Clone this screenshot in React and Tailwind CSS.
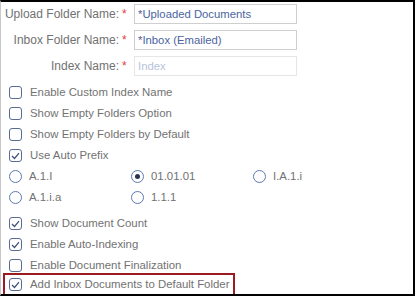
import React from "react";

const font = { fontFamily: '"Liberation Sans", Arial, sans-serif' };

function Box({ checked }) {
  return (
    <span className="w-[13px] h-[13px] rounded-[3px] border border-[#5b6b95] bg-white flex items-center justify-center shrink-0">
      {checked && (
        <svg width="9" height="8" viewBox="0 0 9 8">
          <path d="M1 4 L3.5 6.5 L8 1.2" fill="none" stroke="#3f4f7a" strokeWidth="1.2" />
        </svg>
      )}
    </span>
  );
}

function Radio({ checked }) {
  return (
    <span className="w-[13px] h-[13px] rounded-full border border-[#5b79b0] bg-white flex items-center justify-center shrink-0">
      {checked && <span className="w-[5px] h-[5px] rounded-full bg-[#2c3550]" />}
    </span>
  );
}

function CheckRow({ label, checked }) {
  return (
    <div className="h-[21px] flex items-center pl-[8px] gap-[8px]">
      <Box checked={checked} />
      <span className="text-[11.4px] text-[#727272] whitespace-nowrap">{label}</span>
    </div>
  );
}

function RadioItem({ label, checked }) {
  return (
    <div className="w-[122px] flex items-center gap-[7px]">
      <Radio checked={checked} />
      <span className="text-[11.4px] text-[#727272] whitespace-nowrap">{label}</span>
    </div>
  );
}

function Field({ label, value, disabled }) {
  return (
    <div className="h-[20px] flex items-center">
      <div className="w-[118px] text-right text-[12px] text-[#727272] whitespace-nowrap">{label}</div>
      <span className="w-[15px] pl-[3px] text-[12px] text-[#e0403a]">*</span>
      <div
        className={
          "w-[163px] h-[20px] border flex items-center pl-[3px] text-[11.3px] whitespace-nowrap " +
          (disabled
            ? "border-[#e6e6e6] text-[#b6c3dc]"
            : "border-[#cfcfcf] text-[#4a65a0]")
        }
      >
        {value}
      </div>
    </div>
  );
}

export default function App() {
  return (
    <div
      style={font}
      className="w-[415px] h-[296px] bg-white border-t-2 border-r-2 border-b-2 border-black border-l border-l-[#c8c8c8] overflow-hidden"
    >
      <div className="pt-[2px] flex flex-col gap-[6px]">
        <Field label="Upload Folder Name:" value="*Uploaded Documents" />
        <Field label="Inbox Folder Name:" value="*Inbox (Emailed)" />
        <Field label="Index Name:" value="Index" disabled />
      </div>
      <div className="mt-[6px] flex flex-col">
        <CheckRow label="Enable Custom Index Name" />
        <CheckRow label="Show Empty Folders Option" />
        <CheckRow label="Show Empty Folders by Default" />
        <CheckRow label="Use Auto Prefix" checked />
        <div className="h-[21px] flex items-center pl-[8px]">
          <RadioItem label="A.1.I" />
          <RadioItem label="01.01.01" checked />
          <RadioItem label="I.A.1.i" />
        </div>
        <div className="h-[21px] flex items-center pl-[8px]">
          <RadioItem label="A.1.i.a" />
          <RadioItem label="1.1.1" />
        </div>
        <div className="mt-[5px]">
          <CheckRow label="Show Document Count" checked />
          <CheckRow label="Enable Auto-Indexing" checked />
          <CheckRow label="Enable Document Finalization" />
        </div>
        <div className="ml-[2px] mt-[-3px] w-[232px] h-[23px] border-2 border-[#9a1c22] flex items-center pl-[4px] gap-[8px]">
          <Box checked />
          <span className="text-[11.4px] text-[#727272] whitespace-nowrap">Add Inbox Documents to Default Folder</span>
        </div>
      </div>
    </div>
  );
}
